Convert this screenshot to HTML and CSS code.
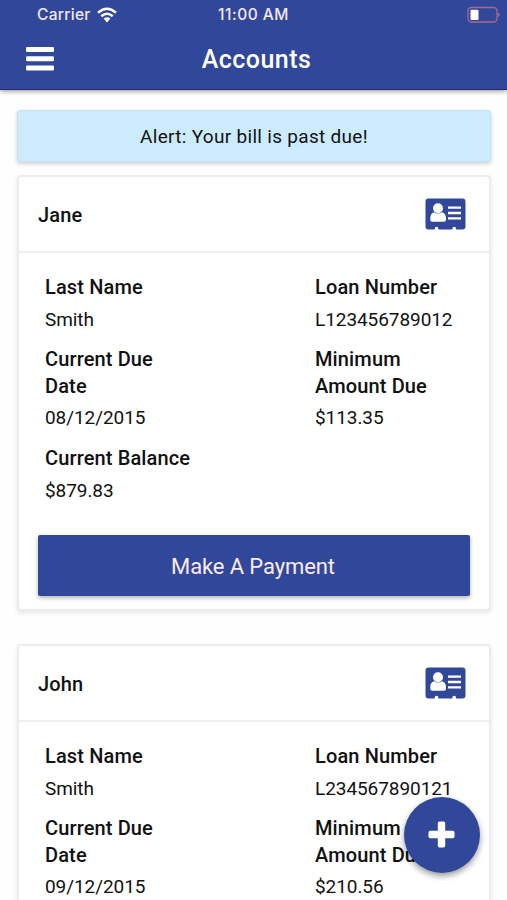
FILE: index.html
```html
<!DOCTYPE html>
<html lang="en">
<head>
<meta charset="utf-8">
<title>Accounts</title>
<link rel="stylesheet" href="styles.css">
</head>
<body>
<svg class="defs" aria-hidden="true">
  <symbol id="card-icon" viewBox="0 0 41 32">
    <path fill="#31489a" d="M3.500 .5h34a3 3 0 0 1 3 3v25a3 3 0 0 1-3 3H31v-1a1.800 1.800 0 0 0-3.600 0v1H13.300v-1a1.800 1.800 0 0 0-3.600 0v1H3.500a3 3 0 0 1-3-3v-25a3 3 0 0 1 3-3z"/>
    <circle cx="13" cy="10.300" r="5" fill="#fff"/>
    <path fill="#fff" d="M9 14.200q4 2.400 8 0c2.500.4 4 2.800 4 6v1.600a2 2 0 0 1-2 2H7.300a2 2 0 0 1-2-2v-1.600c0-3.200 1.200-5.600 3.700-6z"/>
    <path stroke="#fff" stroke-width="2.300" d="M23 9.700h13M23 15h13M23 20.300h13"/>
  </symbol>
</svg>
<div class="screen">
  <header class="header">
    <div class="status">
      <div class="carrier"><span>Carrier</span>
        <svg class="wifi" width="20" height="16" viewBox="0 0 20 16"><g fill="none" stroke="#fff" stroke-width="2.500"><path d="M1 5.700Q10-2.300 19 5.700"/><path d="M4.300 9.300q5.700-5 11.400 0"/></g><path fill="#fff" d="M6.600 11.500q3.400-2.600 6.800 0L10 15.400z"/></svg>
      </div>
      <div class="time">11:00 AM</div>
      <svg class="battery" width="34" height="18" viewBox="0 0 34 18"><rect x="1" y="1.500" width="29" height="14.500" rx="3.500" fill="none" stroke="#a8688f" stroke-width="1.300"/><path fill="#a8688f" d="M31 6.500q3.500 2.200 0 4.500z"/><rect x="3.500" y="3.700" width="8" height="10.300" rx="1" fill="#fff"/></svg>
    </div>
    <div class="toolbar">
      <svg class="menu" width="28" height="24" viewBox="0 0 28 24" fill="#fff"><rect width="28" height="5" rx="1.300"/><rect y="9.300" width="28" height="5" rx="1.300"/><rect y="18.600" width="28" height="5" rx="1.300"/></svg>
      <h1>Accounts</h1>
    </div>
  </header>
  <main>
    <div class="alert">Alert: Your bill is past due!</div>
    <section class="card">
      <div class="card-head"><h2>Jane</h2><svg class="id" width="41" height="32"><use href="#card-icon"/></svg></div>
      <dl class="fields">
        <div><dt>Last Name</dt><dd>Smith</dd></div>
        <div><dt>Loan Number</dt><dd>L123456789012</dd></div>
        <div><dt>Current Due<br>Date</dt><dd>08/12/2015</dd></div>
        <div><dt>Minimum<br>Amount Due</dt><dd>$113.35</dd></div>
        <div><dt>Current Balance</dt><dd>$879.83</dd></div>
      </dl>
      <button class="pay">Make A Payment</button>
    </section>
    <section class="card">
      <div class="card-head"><h2>John</h2><svg class="id" width="41" height="32"><use href="#card-icon"/></svg></div>
      <dl class="fields">
        <div><dt>Last Name</dt><dd>Smith</dd></div>
        <div><dt>Loan Number</dt><dd>L234567890121</dd></div>
        <div><dt>Current Due<br>Date</dt><dd>09/12/2015</dd></div>
        <div><dt>Minimum<br>Amount Due</dt><dd>$210.56</dd></div>
      </dl>
    </section>
  </main>
  <button class="fab" aria-label="Add"><svg width="27" height="27" viewBox="0 0 27 27"><path fill="#fff" d="M11.500 .5h4a1.700 1.700 0 0 1 1.700 1.700v7.600h7.600a1.700 1.700 0 0 1 1.700 1.700v4a1.700 1.700 0 0 1-1.700 1.700h-7.600v7.600a1.700 1.700 0 0 1-1.700 1.700h-4a1.700 1.700 0 0 1-1.700-1.700v-7.600H2.200a1.700 1.700 0 0 1-1.700-1.700v-4a1.700 1.700 0 0 1 1.700-1.700h7.600V2.200A1.700 1.700 0 0 1 11.500 .5z"/></svg></button>
</div>
</body>
</html>
```
FILE: styles.css
```css
* { box-sizing: border-box; }
body { margin: 0; background: #fefefe; font-family: Roboto, sans-serif; color: #111; }
h1, h2, dl, dd { margin: 0; }
button { border: 0; padding: 0; font: inherit; }
svg { display: block; }
.defs { display: none; }
.screen { position: relative; height: 900px; overflow: hidden; }
.header { height: 90px; background: #31489a; color: #fff; border-bottom: 1px solid #27296c; box-shadow: 0 1px 5px rgba(0,0,0,.45); }
.status { height: 29px; display: grid; grid-template-columns: 1fr auto 1fr; align-items: center; padding: 0 6px 0 37px; font: 500 15.500px/29px Inter, sans-serif; color: #f6e7f6; }
.carrier { display: flex; align-items: center; gap: 6px; letter-spacing: .3px; }
.time { margin-right: 31px; letter-spacing: .5px; }
.battery { justify-self: end; }
.toolbar { height: 60px; display: grid; grid-template-columns: 28px 1fr 28px; align-items: center; padding: 0 26px; }
.toolbar h1 { text-align: center; font-size: 25px; font-weight: 500; letter-spacing: .45px; padding-left: 6px; }
main { padding: 20px 16px 0 17px; }
.alert { height: 52px; line-height: 51px; text-align: center; font-size: 19px; letter-spacing: .3px; background: #cdebff; border: 1px solid #c9e0ed; border-radius: 3px; box-shadow: 0 2px 4px rgba(0,0,0,.18); }
.card { margin-top: 13px; height: 436px; border: 2px solid #ececec; border-radius: 4px; background: #fff; box-shadow: 0 2px 4px rgba(0,0,0,.1); }
.card + .card { margin-top: 33px; }
.card-head { display: flex; justify-content: space-between; align-items: center; height: 76px; padding: 0 23px 0 19px; border-bottom: 2px solid #eee; }
.card h2 { font-size: 20px; font-weight: 500; line-height: 24px; padding-top: 1px; letter-spacing: .15px; }
.fields { display: grid; grid-template-columns: 270px 1fr; row-gap: 13px; padding: 21px 0 0 26px; }
.fields dt { font-size: 20px; line-height: 26.400px; font-weight: 500; letter-spacing: .13px; white-space: nowrap; }
.fields dd { font-size: 19px; line-height: 26.400px; margin-top: 6.400px; letter-spacing: -.07px; }
.pay { display: block; width: 432px; height: 61px; margin: 31.400px 0 0 19px; background: #31489a; color: #fbeaf8; border-radius: 2px; font-size: 22px; letter-spacing: -.1px; padding: 1px 2px 0 0; box-shadow: 0 2px 4px rgba(0,0,0,.3); }
.fab { position: absolute; left: 404px; top: 797px; width: 76px; height: 76px; border-radius: 50%; background: #31489a; display: grid; place-items: center; padding: 0 2px 2px 0; box-shadow: 0 3px 6px rgba(0,0,0,.4); }
```
